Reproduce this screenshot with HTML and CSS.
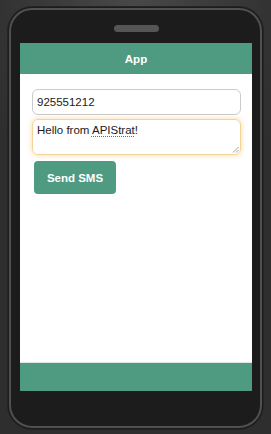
FILE: index.html
```html
<!DOCTYPE html>
<html>
<head>
<meta charset="utf-8">
<link rel="stylesheet" href="styles.css">
</head>
<body>
<div class="phone">
  <div class="frame">
    <div class="speaker"></div>
    <div class="screen">
      <div class="header">App</div>
      <div class="content">
        <div class="input">925551212</div>
        <div class="textarea">Hello from <span class="typo">APIStrat</span>!<span class="grip"><svg width="7" height="7" viewBox="0 0 7 7"><path d="M1 6.5 L6.5 1 M4 6.5 L6.5 4" stroke="#888" stroke-width="0.8" fill="none"/></svg></span></div>
        <button class="btn">Send SMS</button>
      </div>
      <div class="footer"></div>
    </div>
  </div>
</div>
</body>
</html>
```
FILE: styles.css
```css
html, body {
  margin: 0;
  padding: 0;
  width: 271px;
  height: 434px;
  overflow: hidden;
}
body {
  background: radial-gradient(ellipse 70% 45% at 50% 0%, #484848 0%, #333 70%, #2e2e2e 100%);
  font-family: "Liberation Sans", Arial, sans-serif;
  padding-top: 6px;
  box-sizing: border-box;
}
.phone {
  margin-left: 7px;
  width: 257px;
  height: 424px;
  box-sizing: border-box;
  border: 1px solid #242424;
  border-radius: 25px;
  padding: 1px;
  background: #1c1c1c;
}
.frame {
  height: 100%;
  box-sizing: border-box;
  border: 2px solid #505050;
  border-radius: 23px;
  background: #1c1c1c;
  padding: 15px 8px 35px 9px;
  display: flex;
  flex-direction: column;
  align-items: center;
}
.speaker {
  width: 45px;
  height: 7px;
  border-radius: 4px;
  background: #555;
  margin-bottom: 11px;
  margin-left: 1px;
}
.screen {
  align-self: stretch;
  flex: 1;
  display: flex;
  flex-direction: column;
  background: #fff;
}
.header {
  height: 31px;
  background: #4e9b82;
  color: #fff;
  font-weight: bold;
  font-size: 11.5px;
  display: flex;
  align-items: center;
  justify-content: center;
}
.content {
  flex: 1;
  padding: 15px 11px 0 12px;
  display: flex;
  flex-direction: column;
  align-items: stretch;
}
.input {
  height: 26px;
  box-sizing: border-box;
  border: 1px solid #cbcbcb;
  border-radius: 6px;
  padding: 0 4px;
  font-size: 11.5px;
  line-height: 24px;
  color: #1a1a1a;
}
.textarea {
  position: relative;
  margin-top: 4px;
  height: 36px;
  box-sizing: border-box;
  border: 1px solid #f2d49a;
  border-radius: 6px;
  box-shadow: 0 0 4px 1px rgba(250, 200, 110, 0.5);
  padding: 3px 4px;
  font-size: 11.5px;
  line-height: 14px;
  color: #1a1a1a;
}
.typo {
  text-decoration-line: underline;
  text-decoration-style: dotted;
  text-decoration-color: #f03030;
  text-decoration-thickness: 1px;
  text-underline-offset: 2px;
}
.grip {
  position: absolute;
  right: 1px;
  bottom: 1px;
  width: 7px;
  height: 7px;
  display: flex;
}
.btn {
  align-self: flex-start;
  margin-top: 6px;
  margin-left: 2px;
  width: 82px;
  height: 33px;
  border: none;
  border-radius: 4px;
  background: #4e9b82;
  color: #fff;
  font-family: "Liberation Sans", Arial, sans-serif;
  font-weight: bold;
  font-size: 11.5px;
  padding: 0;
}
.footer {
  height: 29px;
  box-sizing: border-box;
  border-top: 1px solid #dfe5e3;
  background: #4e9b82;
}
```
